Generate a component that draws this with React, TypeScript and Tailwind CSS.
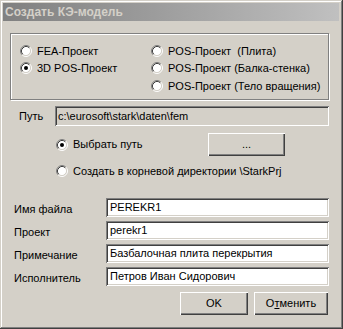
import React from "react";

function Radio({ checked }: { checked?: boolean }) {
  return (
    <svg width="12" height="12" viewBox="0 0 12 12" className="shrink-0">
      <circle cx="6" cy="6" r="4.5" fill="#ffffff" />
      <path d="M2.11 9.89 A5.5 5.5 0 0 1 9.89 2.11" stroke="#808080" strokeWidth="1" fill="none" />
      <path d="M9.89 2.11 A5.5 5.5 0 0 1 2.11 9.89" stroke="#ffffff" strokeWidth="1" fill="none" />
      <path d="M2.82 9.18 A4.5 4.5 0 0 1 9.18 2.82" stroke="#404040" strokeWidth="1" fill="none" />
      <path d="M9.18 2.82 A4.5 4.5 0 0 1 2.82 9.18" stroke="#d4d0c8" strokeWidth="1" fill="none" />
      {checked && <circle cx="6" cy="6" r="2" fill="#000000" />}
    </svg>
  );
}

function RadioItem({ label, checked }: { label: string; checked?: boolean }) {
  return (
    <div className="flex items-center h-[17.5px] gap-[5px] whitespace-pre">
      <Radio checked={checked} />
      <span>{label}</span>
    </div>
  );
}

const sunken =
  "shadow-[inset_1px_1px_#808080,inset_-1px_-1px_#ffffff,inset_2px_2px_#404040,inset_-2px_-2px_#d4d0c8]";
const raised =
  "shadow-[inset_1px_1px_#ffffff,inset_-1px_-1px_#404040,inset_-2px_-2px_#808080]";

function FieldRow({ label, value }: { label: string; value: string }) {
  return (
    <div className="flex h-[19px]">
      <div className="w-[103px] pl-[11px] pt-[4px] leading-[14px]">{label}</div>
      <div className={`w-[223px] h-[19px] bg-white ${sunken} pl-[4px] leading-[19px] whitespace-nowrap overflow-hidden`}>
        {value}
      </div>
    </div>
  );
}

export default function App() {
  return (
    <div
      className="w-[343px] h-[329px] bg-[#d4d0c8] p-[3px] flex flex-col text-[11px] text-black shadow-[inset_-1px_-1px_#404040,inset_1px_1px_#d4d0c8,inset_-2px_-2px_#808080,inset_2px_2px_#ffffff]"
      style={{ fontFamily: '"Liberation Sans", Arial, sans-serif' }}
    >
      {/* Title bar */}
      <div className="h-[18px] w-[336px] bg-gradient-to-r from-[#808080] to-[#c0c0c0] flex items-center pl-[2px]">
        <span className="font-bold text-[12px] text-[#d4d0c8] whitespace-nowrap">Создать КЭ-модель</span>
      </div>

      {/* client */}
      <div className="flex flex-col">
        {/* group box */}
        <div className="mt-[12px] ml-[7px] w-[319px] h-[67px] border border-[#808080] shadow-[inset_1px_1px_#ffffff,1px_1px_#ffffff] pl-[9px] pt-[8px] flex">
          <div className="w-[131px] flex flex-col">
            <RadioItem label="FEA-Проект" />
            <RadioItem label="3D POS-Проект" checked />
          </div>
          <div className="flex flex-col">
            <RadioItem label="POS-Проект  (Плита)" />
            <RadioItem label="POS-Проект (Балка-стенка)" />
            <RadioItem label="POS-Проект (Тело вращения)" />
          </div>
        </div>

        {/* path */}
        <div className="flex mt-[6px] h-[20px] items-center">
          <div className="w-[52px] pl-[16px]">Путь</div>
          <div className={`w-[274px] h-[20px] ${sunken} pl-[3px] leading-[20px] whitespace-nowrap`}>
            c:\eurosoft\stark\daten\fem
          </div>
        </div>

        {/* choose path */}
        <div className="flex mt-[7px] h-[23px] items-center">
          <div className="w-[205px] pl-[53px] flex items-center gap-[5px]">
            <Radio checked />
            <span>Выбрать путь</span>
          </div>
          <div className={`w-[77px] h-[23px] ${raised} flex items-center justify-center`}>...</div>
        </div>

        <div className="flex mt-[7px] h-[16px] items-center pl-[53px] gap-[5px] whitespace-nowrap">
          <Radio />
          <span>Создать в корневой директории \StarkPrj</span>
        </div>

        {/* fields */}
        <div className="flex flex-col gap-[4px] mt-[19px]">
          <FieldRow label="Имя файла" value="PEREKR1" />
          <FieldRow label="Проект" value="perekr1" />
          <FieldRow label="Примечание" value="Базбалочная плита перекрытия" />
          <FieldRow label="Исполнитель" value="Петров Иван Сидорович" />
        </div>

        {/* buttons */}
        <div className="flex mt-[6px] pl-[177px] gap-[6px]">
          <div className={`w-[68px] h-[23px] ${raised} flex items-center justify-center`}>OK</div>
          <div className={`w-[74px] h-[23px] ${raised} flex items-center justify-center`}>
            <span>
              О<span className="underline">т</span>менить
            </span>
          </div>
        </div>
      </div>
    </div>
  );
}
